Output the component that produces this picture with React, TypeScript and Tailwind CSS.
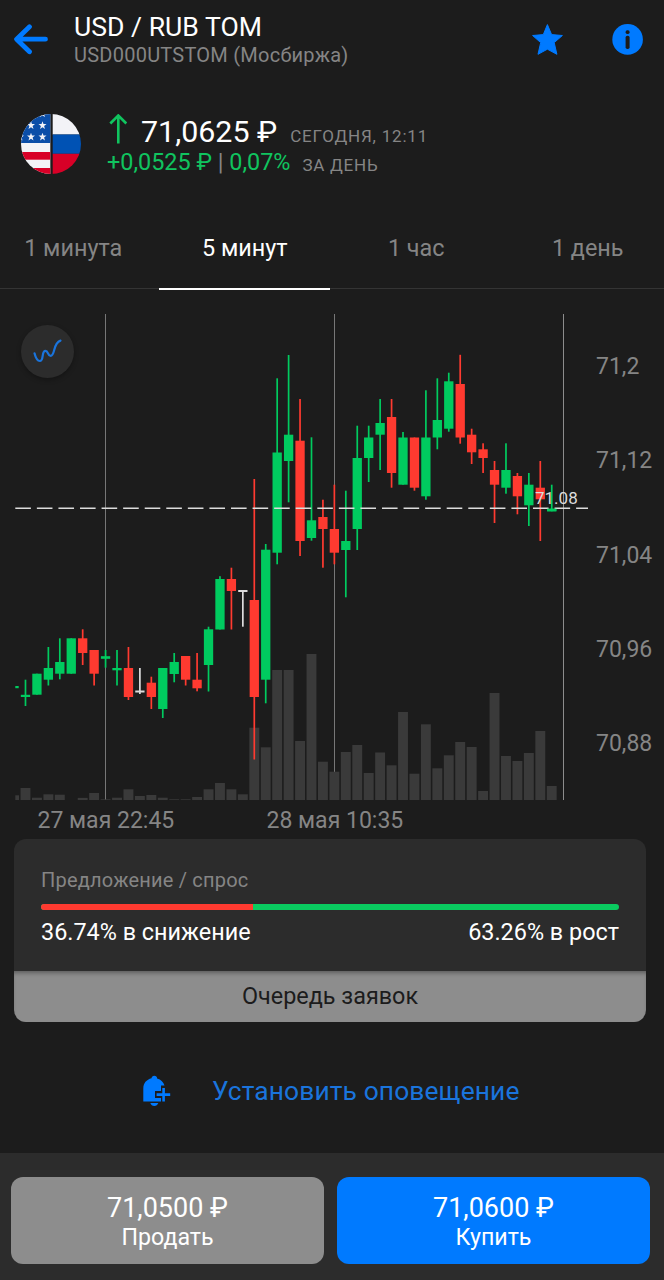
type Kind = "up" | "down" | "flat";

// [kind, high, open/close top, open/close bottom, low, volume top]
type Candle = [Kind, number, number, number, number, number];

const STEP = 11.44;
const FIRST_X = 14;
const BASE_Y = 800;

const candles: Candle[] = [
  ["up", 686, 686, 688.2, 688.2, 795.3],
  ["up", 679.7, 694.8, 697, 706, 788],
  ["up", 673.7, 673.7, 694.7, 694.7, 797.7],
  ["up", 647, 668, 679.7, 685.5, 794.3],
  ["up", 638.3, 662, 673.7, 679.3, 794.7],
  ["up", 638.3, 638.3, 673.7, 673.7, 800],
  ["down", 629.3, 638.3, 653, 665, 797.9],
  ["down", 650, 650, 673.7, 685.5, 793],
  ["up", 650, 656.2, 658.8, 667.7, 799.3],
  ["up", 650, 668, 670.3, 685.5, 797.7],
  ["down", 647, 668, 697, 700, 789.3],
  ["flat", 668, 690.5, 692.5, 694, 796],
  ["down", 676.7, 682.7, 697, 709, 795],
  ["up", 668, 668, 709, 718, 797.7],
  ["up", 653, 662, 674, 682.3, 799.3],
  ["down", 656, 656, 679.7, 685.5, 799.3],
  ["down", 653, 679.7, 688.3, 691.3, 797],
  ["up", 626.7, 629.3, 665, 691.5, 789.3],
  ["up", 576.2, 579, 629.5, 629.5, 783],
  ["down", 567.7, 579, 591, 629.5, 789.3],
  ["flat", 590, 590, 592, 626.7, 794.3],
  ["down", 479, 600, 697, 759.5, 727.7],
  ["up", 544, 549.7, 679.7, 703.3, 747.3],
  ["up", 378.3, 452.5, 552.7, 564.3, 670],
  ["up", 355, 434.7, 461, 502.3, 670],
  ["down", 399, 440.7, 541, 556, 741],
  ["up", 437.3, 520.3, 538, 540.7, 654],
  ["down", 499.7, 517, 529, 567.7, 761.7],
  ["down", 484.7, 529, 552.7, 564.3, 771.7],
  ["up", 490.7, 541, 550, 597.3, 752],
  ["up", 425.7, 458, 529, 550, 745],
  ["up", 425.7, 437.5, 458, 482, 773],
  ["up", 399, 423, 434.7, 470, 752.5],
  ["down", 399, 417, 473, 487.7, 765.3],
  ["up", 432, 437.5, 484.7, 484.7, 712],
  ["down", 437.5, 437.5, 487.7, 490.7, 773.7],
  ["up", 390.3, 437.5, 496.3, 499.7, 724.3],
  ["up", 378.3, 420, 437.5, 449.3, 768.3],
  ["up", 372.7, 381.3, 428.7, 431.7, 755.3],
  ["down", 354.8, 384, 437.5, 443.7, 742],
  ["down", 428.7, 434.7, 452.3, 464, 747],
  ["down", 443.3, 449.3, 458, 473, 791],
  ["down", 461, 470, 484.7, 523, 693],
  ["up", 443.3, 470, 487.7, 493.7, 756],
  ["down", 473, 476, 496.3, 514.3, 761],
  ["up", 473, 484.7, 505.3, 526, 753],
  ["down", 461, 487.7, 499.3, 541, 731],
  ["up", 484.7, 508.7, 511.3, 511.3, 786],
];

const colors: Record<Kind, string> = {
  up: "#00cb5f",
  down: "#ff3a30",
  flat: "#dcdcdc",
};

const tabs = ["1 минута", "5 минут", "1 час", "1 день"];

const priceTicks = [
  { label: "71,2", y: 373.5 },
  { label: "71,12", y: 468 },
  { label: "71,04", y: 562.5 },
  { label: "70,96", y: 657 },
  { label: "70,88", y: 751.3 },
];

const Header = () => (
  <header className="flex h-[98px] pt-3">
    <button className="ml-3.5 mt-3 h-[31px] w-[60px]" aria-label="Назад">
      <svg width="34" height="31" viewBox="0 0 34 31" fill="none" stroke="#007aff" strokeWidth="4.8" strokeLinecap="round" strokeLinejoin="round">
        <path d="M31.5 15.2H3M15.5 2.8L2.6 15.2L15.5 27.8" />
      </svg>
    </button>
    <div className="flex-1">
      <h1 className="text-[26.6px] leading-[30px] text-white">USD / RUB TOM</h1>
      <div className="text-[20px] leading-[26px] tracking-[0.24px] text-[#858585]">USD000UTSTOM (Мосбиржа)</div>
    </div>
    <button className="mt-3 mr-[49px] h-[31px] w-[31px]" aria-label="Избранное">
      <svg width="31" height="31" viewBox="0 0 31 31" fill="#007aff" stroke="#007aff" strokeWidth="1" strokeLinejoin="round">
        <path d="M15.4 .6L19.6 10.6L30.4 11.5L22.2 18.6L24.9 30.3L15.4 25.2L6 30.3L8.7 18.6L.6 11.5L11.3 10.6Z" />
      </svg>
    </button>
    <button className="mt-3 mr-[21px] h-[31px] w-[31px]" aria-label="Информация">
      <svg width="31" height="31" viewBox="0 0 31 31">
        <circle cx="15.6" cy="15.4" r="15.3" fill="#007aff" />
        <rect x="13.6" y="6.3" width="4" height="3.6" rx="1.6" fill="#1c1c1c" />
        <rect x="13.6" y="11.7" width="4" height="13.3" rx="1.8" fill="#1c1c1c" />
      </svg>
    </button>
  </header>
);

const STAR = "M0-4L1-1.2L4-1.2L1.6.7L2.5 3.6L0 1.9L-2.5 3.6L-1.6.7L-4-1.2L-1-1.2Z";

const Flags = () => (
  <svg className="ml-[21px] shrink-0" width="60" height="60" viewBox="0 0 60 60">
    <defs>
      <clipPath id="round">
        <circle cx="30" cy="30" r="30" />
      </clipPath>
    </defs>
    <g clipPath="url(#round)">
      <rect width="29.3" height="60" fill="#f3f3f7" />
      <rect width="29.3" height="29" fill="#0b4ea8" />
      <rect y="38" width="29.3" height="7.7" fill="#d80027" />
      <rect y="54" width="29.3" height="6" fill="#d80027" />
      <g fill="#f3f3f7">
        <path d={STAR} transform="translate(21.5 -.5)" />
        <path d={STAR} transform="translate(10 11.3)" />
        <path d={STAR} transform="translate(21.5 11.3)" />
        <path d={STAR} transform="translate(-1 22.8)" />
        <path d={STAR} transform="translate(10 22.8)" />
        <path d={STAR} transform="translate(21.5 22.8)" />
      </g>
      <rect x="31.7" width="29" height="20.5" fill="#f3f3f7" />
      <rect x="31.7" y="20.5" width="29" height="19.3" fill="#0052b4" />
      <rect x="31.7" y="39.8" width="29" height="21" fill="#d80027" />
    </g>
  </svg>
);

const Quote = () => (
  <section className="mt-4 flex h-[60px]">
    <Flags />
    <div className="ml-[26px] pt-0.5">
      <div className="flex h-8 items-baseline leading-8">
        <svg className="ml-0.5 mr-3.5 self-start -mt-0.5" width="18" height="30" viewBox="0 0 18 30" fill="none" stroke="#10c45f" strokeWidth="2.6">
          <path d="M9.3 29.5V1.5M1.3 9.5L9.3 1.5L17.3 9.5" />
        </svg>
        <span className="text-[30.4px] text-white">71,0625 ₽</span>
        <span className="ml-[13px] text-[17px] tracking-[0.8px] text-[#858585]">СЕГОДНЯ, 12:11</span>
      </div>
      <div className="flex h-7 items-baseline leading-7">
        <span className="text-[23.4px] text-[#10c45f]">
          +0,0525 ₽ <span className="text-[#858585]">|</span> 0,07%
        </span>
        <span className="relative top-px ml-3 text-[17px] tracking-[0.75px] text-[#858585]">ЗА ДЕНЬ</span>
      </div>
    </div>
  </section>
);

const Tabs = () => (
  <nav className="mt-[34px] flex h-[81px] border-b border-[#343434]">
    <div className="-ml-[12.5px] flex">
      {tabs.map((tab, i) => (
        <div
          key={tab}
          className={
            i === 1
              ? "relative flex w-[171.5px] items-center justify-center pt-0.5 text-[23.4px] text-white"
              : "relative flex w-[171.5px] items-center justify-center pt-0.5 text-[23.4px] text-[#858585]"
          }
        >
          {tab}
          {i === 1 && <span className="absolute left-0 right-px -bottom-0.5 h-0.5 bg-white" />}
        </div>
      ))}
    </div>
  </nav>
);

const Chart = () => (
  <section className="relative h-[550px]">
    <svg className="block" width="664" height="550" viewBox="0 289 664 550">
      <defs>
        <clipPath id="plot">
          <rect x="15.3" y="289" width="573" height="511" />
        </clipPath>
      </defs>

      <g stroke="#777777" strokeWidth="1">
        <path d="M105.5 314V800M334.5 314V800" />
        <path d="M563.5 314V800" stroke="#8c8c8c" />
      </g>

      <g clipPath="url(#plot)">
        {candles.map(([, , , , , volume], i) => (
          <rect key={i} x={FIRST_X + i * STEP - 4.9} y={volume} width="9.9" height={BASE_Y - volume} fill="#3a3a3a" />
        ))}
        {candles.map(([kind, high, top, bottom, low], i) => {
          const x = FIRST_X + i * STEP;
          return (
            <g key={i} fill={colors[kind]}>
              {i > 0 && <rect x={x - 0.8} y={high} width="1.7" height={low - high} />}
              <rect x={x - 4.6} y={top} width="9.3" height={bottom - top} />
            </g>
          );
        })}
      </g>

      <path d="M15.3 508.3H588" stroke="#dcdcdc" strokeWidth="1.4" strokeDasharray="15.6 5.97" />
      <rect x="547.1" y="508.7" width="9.3" height="2.6" fill={colors.up} />
      <text x="535" y="503.5" fontSize="17" fill="#dcdcdc">71.08</text>

      <g fontSize="23" fill="#858585">
        {priceTicks.map((tick) => (
          <text key={tick.label} x="596" y={tick.y}>{tick.label}</text>
        ))}
        <text x="37.5" y="828">27 мая 22:45</text>
        <text x="266.5" y="828">28 мая 10:35</text>
      </g>
    </svg>

    <button
      className="absolute left-[21px] top-[35.5px] flex h-[53px] w-[53px] items-center justify-center rounded-full bg-[#2c2c2c] shadow-[0_2px_5px_rgba(0,0,0,0.3)]"
      aria-label="Тип графика"
    >
      <svg width="29" height="24" viewBox="0 0 29 24" fill="none" stroke="#1a74dc" strokeWidth="2.2" strokeLinecap="round">
        <path d="M1.5 14.3C2.8 19.5 4.6 22 6.8 22C11.2 22 8.2 11.8 12.4 11.8C15.6 11.8 14.4 16.8 17.6 16.8C22.4 16.8 19.6 4.2 27.5 1.6" />
      </svg>
    </button>
  </section>
);

const DemandCard = () => (
  <section className="mx-3.5 w-[632px] overflow-hidden rounded-xl bg-[#2c2c2c]">
    <div className="h-[132px] px-[27px] pt-7">
      <div className="text-[20px] leading-[26px] tracking-[0.2px] text-[#858585]">Предложение / спрос</div>
      <div className="mt-[11px] flex h-1.5 overflow-hidden rounded-full bg-[#0acb60]">
        <div className="w-[36.74%] bg-[#ff3a30]" />
      </div>
      <div className="mt-2 flex justify-between text-[23.4px] leading-7 text-white">
        <span>36.74% в снижение</span>
        <span>63.26% в рост</span>
      </div>
    </div>
    <button className="h-[51px] w-full bg-[#8d8d8d] pt-px text-[23.4px] text-[#1c1c1c] shadow-[inset_0_4px_4px_-2px_rgba(0,0,0,0.35)]">
      Очередь заявок
    </button>
  </section>
);

const BellPlus = () => (
  <svg width="29" height="32" viewBox="0 0 29 32">
    <path
      fill="#007aff"
      d="M11.3 .7C13 .7 14.1 1.8 14.1 3.4C18 4.5 20.6 7 21.5 10.5H18V16H12V23H18V26.6H.3V13.5C.3 8 3.5 4.6 8.5 3.2C8.7 1.7 9.7 .7 11.3 .7Z"
    />
    <path fill="#007aff" d="M7.3 28H15.3C14.6 30 13.2 31 11.3 31S8 30 7.3 28Z" />
    <path stroke="#007aff" strokeWidth="2.6" d="M13.6 19.6H27.2M20.6 13V26.4" />
  </svg>
);

const TradeButton = ({ price, label, className }: { price: string; label: string; className: string }) => (
  <button className={className}>
    <span className="text-[27px] leading-8">{price}</span>
    <span className="text-[23.2px] leading-[26px]">{label}</span>
  </button>
);

const App = () => {
  return (
    <main className="flex h-[1280px] w-[664px] flex-col overflow-hidden bg-[#1c1c1c] font-['Roboto',sans-serif]">
      <Header />
      <Quote />
      <Tabs />
      <Chart />
      <DemandCard />
      <div className="mt-[53px] flex h-8 items-center">
        <div className="ml-[143px]">
          <BellPlus />
        </div>
        <span className="ml-10 pt-0.5 text-[26.4px] tracking-[0.1px] text-[#1a74dc]">Установить оповещение</span>
      </div>
      <footer className="mt-auto flex h-[127px] gap-[13px] bg-[#2c2c2c] pl-[11px] pt-6">
        <TradeButton
          price="71,0500 ₽"
          label="Продать"
          className="flex h-[87px] w-[313px] flex-col items-center rounded-xl bg-[#8d8d8d] pt-[15px] text-white"
        />
        <TradeButton
          price="71,0600 ₽"
          label="Купить"
          className="flex h-[87px] w-[313px] flex-col items-center rounded-xl bg-[#007aff] pt-[15px] text-white"
        />
      </footer>
    </main>
  );
};

export default App;
